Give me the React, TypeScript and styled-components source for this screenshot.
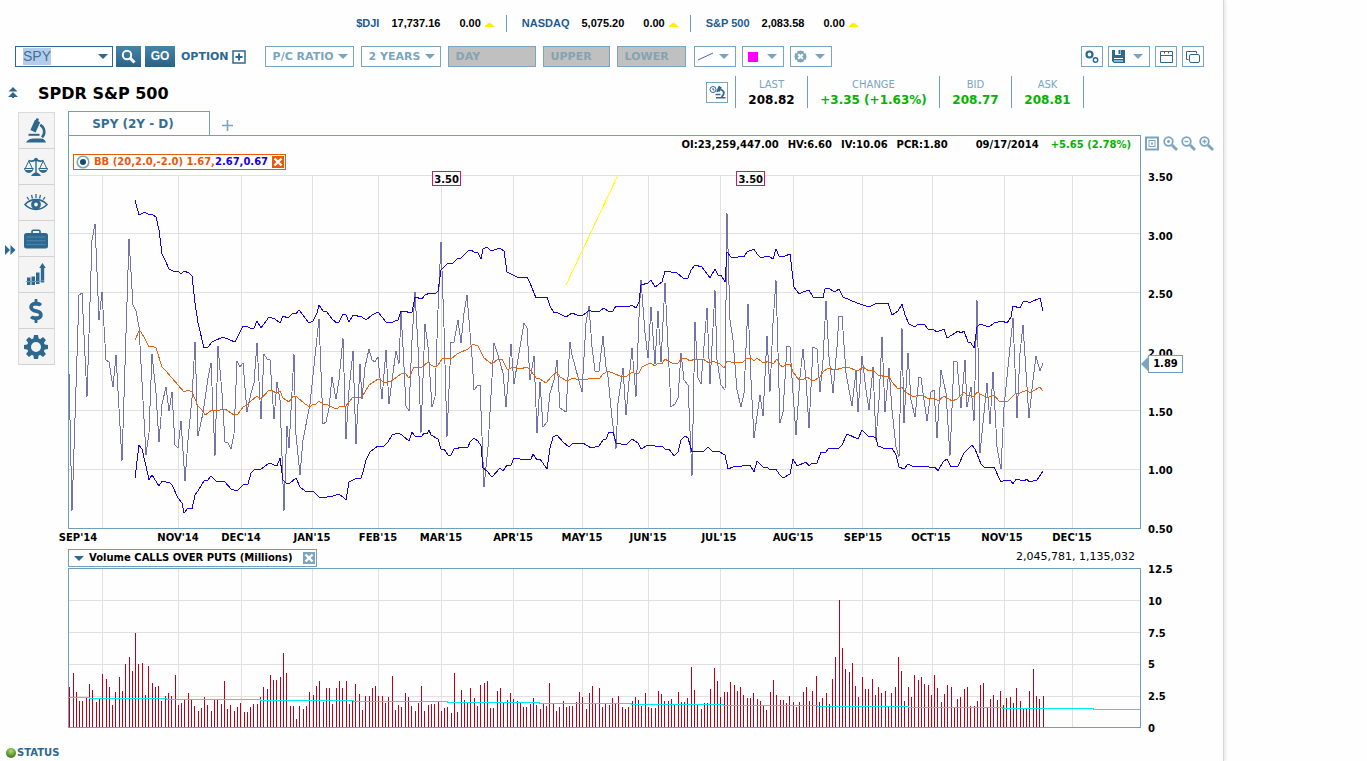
import React, { useEffect, useRef } from "react";
import styled, { createGlobalStyle } from "styled-components";
import { FaDollarSign } from "react-icons/fa";

const color = {
  line: "#6f9fbd",
  soft: "#7ba5bf",
  deep: "#2c688f",
  grid: "#e1e1e1",
  up: "#00b400",
  orange: "#e8590c",
  band: "#1500e0",
  price: "#7474a8",
  bar: "#b8001a",
};

const GlobalStyle = createGlobalStyle`
  *, *::before, *::after { box-sizing: border-box; }
  body {
    margin: 0;
    background: #fefefe;
    color: #000;
    font: 11px/16px "DejaVu Sans", Verdana, sans-serif;
  }
  button, input, select { font: inherit; margin: 0; }
  ul { list-style: none; margin: 0; padding: 0; }
  svg { display: block; }
`;

/* ---------- page frame ---------- */

const Page = styled.div`
  display: grid;
  grid-template-columns: minmax(0, 1fr) 143px;
  min-height: 100vh;
`;

const Main = styled.main`
  display: flex;
  flex-direction: column;
  min-width: 0;
  border-right: 1px solid #d6d6d6;
  box-shadow: 2px 0 2px #ececec;
`;

/* ---------- index ticker ---------- */

const Ticker = styled.ul`
  display: flex;
  justify-content: center;
  padding: 15px 12px 0 0;
  font: bold 11px/17px "Liberation Sans", Arial, sans-serif;
`;

const TickerItem = styled.li`
  display: flex;
  align-items: center;
  padding: 0 12px 0 15px;
  & + & { border-left: 1px solid ${color.line}; }
`;

const TickerLink = styled.a`
  color: #1b5a94;
  text-decoration: none;
  margin-right: 12px;
`;

const TickerChange = styled.span`
  display: flex;
  align-items: center;
  gap: 4px;
  margin-left: 19px;
`;

/* ---------- toolbar ---------- */

const Toolbar = styled.div`
  display: flex;
  align-items: center;
  margin-top: 14px;
  padding: 0 19px 0 15px;
`;

const Group = styled.div<{ $gap: number; $left?: number; $end?: boolean }>`
  display: flex;
  align-items: center;
  gap: ${(p) => p.$gap}px;
  margin-left: ${(p) => (p.$end ? "auto" : `${p.$left ?? 0}px`)};
`;

const SymbolBox = styled.label`
  display: flex;
  align-items: center;
  width: 98px;
  height: 21px;
  padding: 0 4px 0 7px;
  border: 1px solid ${color.deep};
  background: #fff;
`;

const SymbolInput = styled.input`
  flex: 1;
  min-width: 0;
  border: 0;
  padding: 0;
  outline: 0;
  background: transparent;
  color: #42709a;
  font: 14px/17px "Liberation Sans", Arial, sans-serif;
  &::selection { background: #b4cdea; color: #42709a; }
`;

const SolidButton = styled.button<{ $width: number }>`
  display: flex;
  align-items: center;
  justify-content: center;
  width: ${(p) => p.$width}px;
  height: 21px;
  padding: 0;
  border: 0;
  background: linear-gradient(#4684a8, #2a6288);
  color: #fff;
  font: bold 12px/21px "Liberation Sans", Arial, sans-serif;
`;

const OptionButton = styled.button`
  display: flex;
  align-items: center;
  gap: 3px;
  padding: 0;
  border: 0;
  background: none;
  color: ${color.deep};
  font-weight: bold;
`;

const SelectWrap = styled.label<{ $width: number }>`
  position: relative;
  width: ${(p) => p.$width}px;
  height: 21px;
  & > svg {
    position: absolute;
    right: 6px;
    top: 8px;
    pointer-events: none;
  }
`;

const Select = styled.select`
  width: 100%;
  height: 21px;
  padding: 0 7px;
  appearance: none;
  border: 1px solid ${color.soft};
  border-radius: 0;
  background: #fff;
  color: ${color.soft};
  font-weight: bold;
  &:disabled { background: #c0c0c0; color: #86a3b2; opacity: 1; }
`;

const FrameButton = styled.button<{ $wide?: boolean }>`
  display: flex;
  align-items: center;
  justify-content: ${(p) => (p.$wide ? "space-between" : "center")};
  width: ${(p) => (p.$wide ? 42 : 22)}px;
  height: 21px;
  padding: ${(p) => (p.$wide ? "0 6px 0 3px" : "0")};
  border: 1px solid ${color.soft};
  background: #fff;
  color: ${color.deep};
`;

const Swatch = styled.span`
  width: 10px;
  height: 10px;
  margin-left: 2px;
  background: #f0f;
`;

/* ---------- symbol header ---------- */

const InfoRow = styled.div`
  display: flex;
  align-items: center;
  height: 32px;
  margin-top: 9px;
  padding: 0 139px 0 8px;
`;

const BareButton = styled.button`
  display: flex;
  padding: 0;
  border: 0;
  background: none;
  color: ${color.deep};
`;

const Title = styled.h1`
  flex: 1;
  margin: 0 0 0 20px;
  padding-top: 3px;
  font-size: 16px;
  line-height: 20px;
`;

const Quotes = styled.dl`
  display: flex;
  margin: 0 0 0 7px;
  border-right: 1px solid ${color.line};
`;

const Quote = styled.div<{ $wide?: boolean }>`
  width: ${(p) => (p.$wide ? 132 : 72)}px;
  height: 32px;
  border-left: 1px solid ${color.line};
  text-align: center;
`;

const QuoteName = styled.dt`
  padding-top: 1px;
  color: ${color.soft};
  font-size: 10px;
  line-height: 15px;
`;

const QuoteValue = styled.dd<{ $up?: boolean }>`
  margin: 0;
  font-size: 12px;
  font-weight: bold;
  color: ${(p) => (p.$up ? color.up : "#000")};
`;

/* ---------- body ---------- */

const Body = styled.div`
  display: grid;
  grid-template-columns: 18px 37px minmax(0, 1fr);
  align-items: start;
  margin-top: 3px;
`;

const Rail = styled.div`
  padding: 134px 0 0 5px;
`;

const Side = styled.nav`
  display: flex;
  flex-direction: column;
  margin-top: 1px;
  border: 1px solid #dadada;
  border-bottom: 0;
`;

const SideButton = styled.button`
  display: flex;
  align-items: center;
  justify-content: center;
  height: 36px;
  padding: 0 1px 0 0;
  border: 0;
  border-bottom: 1px solid #d2d2d2;
  background: #f4f4f4;
  color: ${color.deep};
`;

const Workspace = styled.section`
  padding-left: 13px;
`;

const Tabs = styled.div`
  display: flex;
  align-items: center;
  height: 24px;
`;

const Tab = styled.button`
  position: relative;
  align-self: flex-start;
  width: 142px;
  height: 25px;
  padding: 0 12px 0 0;
  border: 1px solid ${color.line};
  border-bottom: 0;
  background: #fefefe;
  color: #356e94;
  font-size: 12px;
  font-weight: bold;
`;

const AddTab = styled(BareButton)`
  margin: 4px 0 0 12px;
  color: ${color.soft};
`;

const PlotRow = styled.div`
  display: grid;
  grid-template-columns: minmax(0, 1fr) 82px;
`;

const Plot = styled.div`
  position: relative;
  border: 1px solid ${color.line};
`;

const PlotHead = styled.div`
  display: flex;
  justify-content: flex-end;
  height: 39px;
  padding: 1px 9px 0 0;
  font-size: 10px;
  font-weight: bold;
`;

const Readout = styled.span<{ $up?: boolean; $left?: number }>`
  margin-left: ${(p) => p.$left ?? 9}px;
  color: ${(p) => (p.$up ? color.up : "#000")};
`;

const Canvas = styled.svg<{ $height: number }>`
  width: 100%;
  height: ${(p) => p.$height}px;
  shape-rendering: crispEdges;
  & * { vector-effect: non-scaling-stroke; }
`;

const Legend = styled.div`
  position: absolute;
  left: 4px;
  top: 18px;
  display: flex;
  align-items: center;
  height: 16px;
  border: 1px solid ${color.orange};
  background: #fff;
  color: ${color.orange};
  font-size: 10px;
  font-weight: bold;
  gap: 4px;
  padding: 0 1px 0 2px;
`;

const LegendBands = styled.span`
  color: ${color.band};
`;

const Flag = styled.span<{ $at: number }>`
  position: absolute;
  left: ${(p) => p.$at}%;
  top: 35px;
  width: 29px;
  height: 15px;
  border: 1px solid #d8107f;
  background: #fff;
  font-size: 10px;
  line-height: 15px;
  font-weight: bold;
  text-align: center;
`;

const Axis = styled.div`
  position: relative;
  display: flex;
  flex-direction: column;
  margin-bottom: -9px;
`;

const ZoomTools = styled.div`
  display: flex;
  gap: 3px;
  height: 16px;
  margin: 1px 0 0 4px;
  button { color: ${color.soft}; }
`;

const Scale = styled.ul<{ $top: number }>`
  flex: 1;
  display: flex;
  flex-direction: column;
  justify-content: space-between;
  margin-top: ${(p) => p.$top}px;
  padding-left: 7px;
  font-size: 10px;
  font-weight: bold;
`;

const LastTag = styled.div`
  position: absolute;
  left: 0;
  top: 220px;
  display: flex;
  align-items: center;
  font-size: 10px;
  font-weight: bold;
  span {
    width: 34px;
    border: 1px solid ${color.line};
    border-left: 0;
    background: #fff;
    text-align: center;
  }
`;

const Months = styled.ul`
  display: flex;
  height: 20px;
  margin: 0 82px 0 -9px;
  font-size: 10px;
  line-height: 17px;
  font-weight: bold;
`;

const Month = styled.li<{ $span: number }>`
  flex: ${(p) => p.$span} 0 0;
  min-width: 0;
  display: flex;
  justify-content: center;
  white-space: nowrap;
`;

const StudyHead = styled.div`
  display: flex;
  justify-content: space-between;
  align-items: flex-start;
  height: 19px;
  padding-right: 88px;
`;

const StudyTitle = styled.div`
  display: flex;
  align-items: center;
  width: 249px;
  height: 18px;
  padding: 0 1px 0 5px;
  gap: 5px;
  border: 1px solid ${color.line};
  background: #fff;
  h2 { flex: 1; margin: 0; font-size: 10px; line-height: 16px; white-space: nowrap; }
`;

const Status = styled.footer`
  display: flex;
  align-items: center;
  gap: 1px;
  margin-top: auto;
  padding-left: 6px;
  color: ${color.deep};
  font-size: 10px;
  font-weight: bold;
`;

const Led = styled.span`
  width: 10px;
  height: 10px;
  border-radius: 50%;
  background: radial-gradient(circle at 50% 30%, #b4dc7c, #4b8a1e 65%, #356512);
`;

/* ---------- icons ---------- */

const Caret = ({ fill = color.soft }: { fill?: string }) => (
  <svg width="10" height="5" viewBox="0 0 10 5"><path d="M0 0h10L5 5z" fill={fill} /></svg>
);

const Cross = ({ fill }: { fill: string }) => (
  <svg width="12" height="12" viewBox="0 0 12 12">
    <rect width="12" height="12" fill={fill} />
    <path d="M2.500 2.500l7 7M9.500 2.500l-7 7" stroke="#fff" strokeWidth="2.400" />
  </svg>
);

const UpMark = () => (
  <svg width="9" height="7" viewBox="0 0 9 7"><path d="M0 6L3.500 3h2L9 6v1H0z" fill="#fbf000" /></svg>
);

const Search = () => (
  <svg width="15" height="15" viewBox="0 0 15 15" fill="none" stroke="#fff">
    <circle cx="6" cy="6" r="4.200" strokeWidth="2" />
    <path d="M9 9l4.500 4.500" strokeWidth="3" />
  </svg>
);

const PlusBox = () => (
  <svg width="14" height="14" viewBox="0 0 14 14" fill="none" stroke={color.deep}>
    <rect x="1" y="1" width="12" height="12" strokeWidth="1.500" />
    <path d="M7 3.500v7M3.500 7h7" strokeWidth="2" />
  </svg>
);

const DiagonalLine = () => (
  <svg width="16" height="9" viewBox="0 0 16 9"><path d="M0 8L15 1" stroke="#4b5fc4" /></svg>
);

const Eraser = () => (
  <svg width="13" height="13" viewBox="0 0 13 13">
    <circle cx="6.500" cy="6.500" r="6" fill={color.soft} />
    <path d="M4.200 4.200l4.600 4.600M8.800 4.200L4.200 8.800" stroke="#fff" strokeWidth="2.200" />
    <path d="M1.500 1.500l1.500 1.500M11.500 1.500L10 3M1.500 11.500L3 10M11.500 11.500L10 10" stroke="#fff" strokeWidth="1.200" />
  </svg>
);

const Cogs = () => (
  <svg width="14" height="14" viewBox="0 0 14 14" fill="none" stroke={color.deep}>
    <circle cx="4.500" cy="4.500" r="3" strokeWidth="2.200" />
    <circle cx="10.500" cy="10" r="2.200" strokeWidth="1.400" />
  </svg>
);

const Floppy = () => (
  <svg width="13" height="13" viewBox="0 0 13 13">
    <path d="M0 0h13v13H2l-2-2z" fill={color.deep} />
    <path d="M3 0h6v5H3zM2 8h9v1H2zM2 10.500h9v1H2z" fill="#fff" />
    <path d="M6.500 0h2v4h-2z" fill={color.deep} />
  </svg>
);

const Calendar = () => (
  <svg width="13" height="12" viewBox="0 0 13 12" fill="none" stroke={color.deep}>
    <path d="M.5.500h12v11H.500zM.500 4.500h12M4.500.500v2M8.500.500v2" />
  </svg>
);

const Windows = () => (
  <svg width="14" height="12" viewBox="0 0 14 12" fill="none" stroke={color.deep}>
    <path d="M2.500 8.500h-2v-8h10v2" />
    <rect x="3.500" y="3.500" width="10" height="8" rx="1.500" />
  </svg>
);

const DoubleUp = () => (
  <svg width="10" height="11" viewBox="0 0 10 11" fill="currentColor">
    <path d="M5 0l4.500 4.500h-9zM5 5l5 5H6v1H4v-1H0z" />
  </svg>
);

const DoubleRight = () => (
  <svg width="11" height="10" viewBox="0 0 11 10" fill="currentColor">
    <path d="M0 0l5 5-5 5zM5.500 0l5 5-5 5z" />
  </svg>
);

const ScanIcon = () => (
  <svg width="17" height="14" viewBox="0 0 17 14" fill="none" stroke={color.deep}>
    <circle cx="4" cy="4.500" r="3" />
    <path d="M4 3v2h1.500" />
    <path d="M10.500 1l-2.500 6M12 2l-2 4.500" strokeWidth="1.800" />
    <path d="M12 4.500c4 2 3.500 5 .5 7.500" strokeWidth="1.800" />
    <path d="M6.500 9.500h5M7 12.800h9.500" strokeWidth="1.600" />
  </svg>
);

const MicroscopeIcon = () => (
  <svg width="22" height="25" viewBox="0 0 22 25" fill={color.deep}>
    <path d="M10.600 2.200l1-2.200 2.400 1-.8 2.200 2 1-4.600 10.200-5.200-2.400L10 1.800z" />
    <path d="M15.200 6.800c4.600 2.600 5.400 8.600 1.800 12.600" fill="none" stroke={color.deep} strokeWidth="2.600" />
    <path d="M3.500 16.800h11" stroke={color.deep} strokeWidth="2" />
    <path d="M1 24.500Q3 20.500 9 20.500h7q3.500 0 5 4z" />
  </svg>
);

const ScalesIcon = () => (
  <svg width="24" height="20" viewBox="0 0 24 20" fill="none" stroke={color.deep}>
    <path d="M4.500 3.500Q9 5 12 2.500 15 5 19.500 3.500" strokeWidth="1.800" />
    <path d="M12 1v15" strokeWidth="1.400" />
    <path d="M4.800 4L1 12M4.800 4l3.800 8M19.200 4l-3.800 8M19.200 4L23 12" />
    <path d="M.3 11.500h9q-.8 4-4.500 4t-4.500-4zM14.700 11.500h9q-.8 4-4.500 4t-4.500-4z" strokeWidth="1" />
    <path d="M1 13h7.600q-1.400 2.500-3.800 2.500T1 13zM15.400 13H23q-1.400 2.500-3.800 2.500T15.400 13zM7 19q2-3.500 5-3.500t5 3.500z" fill={color.deep} stroke="none" />
    <circle cx="12" cy="2.500" r="1.800" fill={color.deep} stroke="none" />
  </svg>
);

const EyeIcon = () => (
  <svg width="24" height="19" viewBox="0 0 24 19" fill="none" stroke={color.deep}>
    <path d="M1 11.500C6.500 5 17.500 5 23 11.500 17.500 18 6.500 18 1 11.500z" strokeWidth="1.600" />
    <circle cx="12" cy="11.500" r="3.400" strokeWidth="3" />
    <path d="M12 1v4M7.500 2l1 3.500M16.500 2l-1 3.500M3 4l1.800 2.600M21 4l-1.800 2.600" strokeWidth="1.300" />
  </svg>
);

const CaseIcon = () => (
  <svg width="24" height="20" viewBox="0 0 24 20">
    <path d="M8 5V2.500Q8 1.200 9.300 1.200h5.400Q16 1.200 16 2.500V5" fill="none" stroke={color.deep} strokeWidth="1.600" />
    <rect y="4" width="24" height="15.500" rx="2.500" fill={color.deep} />
    <path d="M2.500 8h19M2.500 11.800h19M2.500 15.600h19" stroke="#5288a9" strokeWidth="1" />
  </svg>
);

const GrowthIcon = () => (
  <svg width="20" height="24" viewBox="0 0 20 24" fill={color.deep}>
    <path d="M1 14.500h3.500V22H1zM5.500 13.500H9V22H5.500zM10 9.500h3.500V21H10zM14.800 4h3.400v15.500h-3.400z" />
    <path d="M16.500 0l3.300 5h-6.600z" />
    <path d="M0 18.500h13l5-1" stroke="#6f9ab5" fill="none" />
  </svg>
);

const GearIcon = () => (
  <svg width="24" height="24" viewBox="0 0 24 24">
    <circle cx="12" cy="12" r="7" fill="none" stroke={color.deep} strokeWidth="4" />
    {[0, 45, 90, 135, 180, 225, 270, 315].map((a) => (
      <path key={a} d="M10 0h4l.8 4.500H9.200z" fill={color.deep} transform={`rotate(${a} 12 12)`} />
    ))}
  </svg>
);

const PlusIcon = () => (
  <svg width="11" height="11" viewBox="0 0 11 11"><path d="M5.500 0v11M0 5.500h11" stroke="currentColor" strokeWidth="1.600" /></svg>
);

const FitIcon = () => (
  <svg width="15" height="15" viewBox="0 0 15 15" fill="none" stroke="currentColor">
    <rect x="1" y="1.500" width="12" height="12" strokeWidth="2" />
    <rect x="4" y="4.500" width="6" height="6" />
    <path d="M6 7.500h2" strokeWidth="2" />
  </svg>
);

const Lens = ({ mark }: { mark: string }) => (
  <svg width="15" height="15" viewBox="0 0 15 15" fill="none" stroke="currentColor">
    <circle cx="5.500" cy="5.500" r="4.300" strokeWidth="1.800" />
    <path d="M9 9l5 5" strokeWidth="2.800" />
    <path d={mark} strokeWidth="1.400" />
  </svg>
);

const TargetIcon = () => (
  <svg width="14" height="14" viewBox="0 0 14 14">
    <circle cx="7" cy="7" r="5.800" fill="#fff" stroke="#78a9be" strokeWidth="1.600" />
    <circle cx="7" cy="7" r="3" fill="#17496e" />
  </svg>
);

/* ---------- data ---------- */

const gridX = [102, 178, 241, 312, 378, 441, 513, 582, 648, 720, 793, 862, 932, 1004, 1072];

const upperBand =
  "135,200 139,215 145,212 149,215 152,214 156,217 159,230 162,254 165,260 169,269 175,272 178,271 181,274 184,271 189,273 192,276 195,303 198,323 204,348 208,347 212,342 223,337 230,340 235,342 243,326 247,326 251,329 254,328 257,321 261,328 269,317 275,319 280,323 283,316 288,318 293,313 296,314 299,310 309,323 313,321 317,313 319,305 323,311 326,311 333,320 337,323 339,322 343,314 346,315 349,322 353,315 362,317 366,320 372,315 378,312 386,322 390,323 398,320 401,311 406,311 409,313 412,312 415,297 422,299 425,295 430,293 435,294 438,291 441,270 447,264 453,263 458,258 461,258 468,251 471,250 474,252 478,253 481,259 483,249 487,247 491,251 497,249 500,248 504,251 507,272 517,277 527,277 530,283 536,298 547,297 550,306 554,313 556,312 566,317 572,313 577,315 582,316 587,312 589,310 593,312 600,311 604,308 609,312 613,311 616,306 630,306 632,305 636,308 639,302 641,285 648,283 651,280 655,287 662,282 665,271 677,273 683,278 688,278 691,270 695,265 702,267 710,278 715,269 718,275 721,275 725,282 727,252 731,257 735,257 738,257 741,256 744,257 747,252 754,249 757,254 761,258 767,256 769,256 773,259 776,249 779,256 785,256 790,254 794,287 799,294 803,292 809,290 813,297 816,297 823,298 825,289 829,288 833,291 836,291 839,289 843,297 857,303 863,305 869,307 875,304 883,303 888,303 892,315 895,313 898,311 902,304 905,315 909,324 915,327 918,324 925,325 928,329 933,329 937,332 944,329 947,338 952,335 958,331 961,333 964,331 968,342 971,343 974,348 977,327 980,324 989,327 994,323 1002,321 1007,323 1011,317 1013,306 1020,308 1023,302 1027,301 1029,303 1040,298 1043,311";

const middleBand =
  "135,340 139,331 141,332 145,339 149,347 152,346 156,348 162,367 165,370 172,378 178,385 184,392 188,390 192,392 198,406 202,410 205,415 212,410 215,411 225,409 234,415 238,414 243,407 247,405 251,401 257,396 261,399 269,390 273,391 276,393 280,391 283,398 289,402 293,396 297,397 305,404 310,407 313,404 316,404 319,401 323,404 328,405 336,409 341,406 345,407 353,397 362,397 369,385 378,379 386,383 393,380 402,373 405,373 409,378 414,367 422,367 428,362 431,365 435,367 438,365 442,359 445,358 451,359 457,354 468,349 473,344 475,345 478,346 484,358 492,364 498,359 502,359 507,369 509,369 513,367 520,369 527,367 531,371 536,378 540,379 546,383 552,376 557,372 560,377 567,381 573,378 576,379 582,380 588,379 600,378 603,374 608,371 620,376 627,376 632,372 636,374 639,373 642,367 648,364 651,363 655,366 658,363 662,364 665,359 668,361 674,364 678,363 682,358 686,358 690,361 695,359 703,359 709,363 713,361 720,364 724,368 727,361 731,362 743,362 747,358 751,358 754,361 757,358 762,362 766,363 767,361 773,364 777,359 780,365 783,367 787,364 790,364 793,372 799,380 802,379 804,379 807,377 813,381 820,377 823,372 828,368 835,370 842,368 847,367 858,371 863,367 866,369 869,371 873,370 878,375 887,377 889,376 892,382 898,389 902,387 905,392 914,397 918,395 923,395 928,399 934,398 938,401 944,396 952,401 957,399 964,392 967,395 970,395 974,397 977,392 987,398 994,395 1000,402 1003,401 1008,401 1015,394 1020,393 1027,390 1030,393 1040,387 1043,391";

const lowerBand =
  "135,478 139,445 142,449 146,466 149,480 152,475 159,486 162,481 170,483 172,485 178,498 182,503 184,513 188,508 192,509 195,495 198,491 204,481 208,480 211,476 216,481 225,482 231,489 237,491 243,485 248,484 251,473 255,469 260,470 269,463 277,466 280,458 283,480 287,484 290,483 296,478 300,487 305,491 313,491 319,497 327,497 333,496 339,494 343,497 346,500 349,482 355,479 361,478 363,472 366,460 370,452 378,446 383,447 388,442 392,435 398,433 402,435 409,441 412,432 415,436 422,436 424,433 427,434 429,430 431,435 438,439 441,449 444,449 448,455 451,455 454,449 463,447 468,447 470,442 474,438 478,441 481,446 483,468 487,471 491,476 493,476 500,468 503,471 507,465 511,465 514,458 520,459 531,459 533,454 537,460 540,459 547,469 550,448 553,437 557,435 563,442 569,447 573,443 578,444 583,443 591,448 599,446 603,440 606,439 609,432 613,432 616,443 626,445 632,439 638,443 641,449 648,445 655,446 662,446 665,449 669,449 674,456 678,452 681,440 685,436 688,438 692,452 704,451 708,447 712,451 718,451 725,455 728,469 733,467 738,466 742,466 750,465 754,472 757,461 760,464 763,467 767,467 769,469 776,469 779,474 783,478 790,474 793,459 797,466 806,462 809,466 812,463 817,463 821,452 826,452 829,448 839,448 842,445 847,434 858,439 862,430 868,436 872,436 876,438 878,446 886,449 892,448 896,455 899,467 904,469 908,464 914,467 920,466 924,466 929,467 935,467 938,471 943,462 947,459 951,467 958,466 964,453 972,445 975,449 981,464 984,467 990,468 994,467 1001,482 1005,480 1011,481 1013,484 1016,479 1020,480 1024,481 1027,479 1029,482 1037,480 1039,477 1043,471";

const ratio =
  "69,373 72,511 79,295 82,293 87,397 92,240 95,224 99,320 102,292 106,360 109,362 113,387 116,355 122,461 129,239 133,305 136,311 139,327 146,455 149,433 152,354 156,393 159,442 162,404 166,387 169,411 172,392 175,445 178,448 181,421 185,481 188,440 192,398 195,342 198,436 203,413 208,378 211,363 215,456 218,346 222,393 225,442 228,443 231,449 234,434 237,361 240,367 243,363 247,412 251,393 254,383 257,343 261,419 264,354 267,359 270,360 274,419 277,382 280,400 284,511 287,426 289,448 294,354 296,435 300,475 303,440 310,404 316,347 319,319 323,424 326,422 329,408 332,377 336,399 339,380 343,338 346,439 349,390 353,351 356,444 360,364 362,399 365,367 369,349 372,360 375,362 378,357 382,399 386,350 389,404 393,373 396,351 399,364 401,312 403,347 406,406 409,411 412,340 415,292 418,347 421,433 425,324 428,347 432,407 435,397 438,310 441,242 444,327 447,437 451,342 454,342 458,320 461,343 464,313 467,295 469,320 472,357 474,390 478,385 480,385 484,487 488,447 494,343 498,355 503,373 506,407 511,344 514,384 520,347 524,323 527,328 530,380 534,356 537,433 540,382 543,427 547,422 550,393 554,380 557,360 560,408 566,412 570,342 572,355 582,392 586,323 589,306 592,347 595,371 599,371 603,336 606,367 608,377 612,418 616,449 618,403 623,368 626,415 632,348 636,397 639,317 641,280 645,333 648,358 651,307 655,364 658,311 661,362 665,283 668,347 671,407 675,404 678,398 681,353 684,380 688,385 692,476 695,322 698,378 701,384 707,308 710,384 715,290 717,360 721,385 725,390 727,213 730,320 733,340 737,390 741,407 744,393 748,304 751,380 754,438 760,395 763,416 767,336 770,392 773,323 776,280 780,423 783,412 787,346 790,347 793,393 796,435 800,377 803,349 806,380 809,428 813,347 817,349 820,392 823,360 826,301 829,357 833,393 837,347 839,316 842,316 846,373 852,406 856,371 858,412 862,356 866,390 869,410 873,367 876,440 879,400 882,337 885,412 889,368 892,410 896,447 899,457 902,328 904,423 908,353 911,400 915,417 919,377 921,378 924,400 927,421 931,392 934,390 937,438 941,370 946,393 950,456 954,361 957,362 961,408 965,360 967,407 971,387 974,421 977,300 979,393 980,453 987,383 990,424 993,372 997,447 1001,469 1004,407 1010,347 1013,318 1017,418 1020,353 1023,325 1029,418 1033,380 1036,356 1040,371 1043,363";

/* Tops of the volume bars in plot units, measured against a baseline of 563. */
const BASE = 563;
const barTops = [
  440, 400, 455, 484, 484, 474, 432, 450, 486, 474, 402, 418, 442, 495, 456, 410, 452, 373, 350, 394,
  278, 373, 370, 466, 377, 428, 442, 438, 482, 468, 458, 468, 404, 494, 488, 480, 460, 480, 498, 512,
  503, 472, 495, 514, 478, 478, 492, 422, 508, 494, 512, 502, 490, 515, 515, 500, 492, 492, 472, 440,
  446, 404, 420, 420, 412, 338, 400, 498, 498, 538, 498, 506, 498, 456, 464, 438, 422, 485, 445, 445,
  492, 445, 422, 445, 422, 492, 482, 432, 462, 510, 468, 468, 445, 438, 468, 468, 490, 472, 408, 510,
  494, 500, 458, 470, 498, 514, 490, 438, 512, 496, 492, 492, 484, 512, 505, 500, 518, 398, 515, 450,
  480, 485, 445, 474, 498, 434, 428, 424, 504, 504, 452, 444, 488, 480, 458, 478, 484, 488, 500, 500,
  492, 474, 494, 508, 490, 498, 428, 490, 512, 502, 482, 502, 498, 498, 486, 455, 472, 508, 458, 438,
  490, 445, 500, 488, 494, 474, 490, 468, 502, 506, 502, 484, 470, 480, 498, 460, 500, 504, 504, 452,
  462, 484, 482, 478, 494, 456, 486, 486, 474, 380, 450, 494, 506, 488, 488, 446, 384, 422, 472, 456,
  456, 426, 436, 454, 442, 465, 474, 474, 460, 476, 484, 496, 510, 456, 420, 465, 480, 480, 490, 468,
  486, 500, 486, 456, 442, 482, 452, 408, 486, 475, 458, 492, 418, 350, 181, 324, 386, 396, 370, 438,
  470, 412, 448, 446, 417, 464, 442, 458, 452, 498, 460, 440, 350, 394, 484, 442, 470, 404, 420, 410,
  432, 436, 466, 404, 444, 485, 462, 434, 440, 502, 478, 472, 446, 440, 498, 498, 482, 436, 430, 502,
  478, 466, 480, 452, 494, 474, 470, 488, 444, 484, 506, 506, 452, 386, 468, 476, 468,
];

const months: [string, number][] = [
  ["SEP'14", 38], ["", 50], ["NOV'14", 62], ["DEC'14", 64], ["JAN'15", 78], ["FEB'15", 54],
  ["MAR'15", 72], ["APR'15", 72], ["MAY'15", 66], ["JUN'15", 66], ["JUL'15", 76], ["AUG'15", 72],
  ["SEP'15", 68], ["OCT'15", 68], ["NOV'15", 74], ["DEC'15", 66], ["", 36],
];

const indexes = [
  { name: "$DJI", value: "17,737.16" },
  { name: "NASDAQ", value: "5,075.20" },
  { name: "S&P 500", value: "2,083.58" },
];

const sideItems = [
  { label: "Research", icon: <MicroscopeIcon /> },
  { label: "Compare", icon: <ScalesIcon /> },
  { label: "Watch", icon: <EyeIcon /> },
  { label: "Portfolio", icon: <CaseIcon /> },
  { label: "Studies", icon: <GrowthIcon /> },
  { label: "Trade", icon: <FaDollarSign size={24} /> },
  { label: "Settings", icon: <GearIcon /> },
];

/* ---------- parts ---------- */

function Picker({ name, width, disabled }: { name: string; width: number; disabled?: boolean }) {
  return (
    <SelectWrap $width={width}>
      <Select aria-label={name} disabled={disabled}>
        <option>{name}</option>
      </Select>
      {!disabled && <Caret />}
    </SelectWrap>
  );
}

function SymbolField() {
  const ref = useRef<HTMLInputElement>(null);
  useEffect(() => {
    ref.current?.focus();
    ref.current?.select();
  }, []);
  return (
    <SymbolBox>
      <SymbolInput ref={ref} aria-label="Symbol" defaultValue="SPY" />
      <Caret fill={color.deep} />
    </SymbolBox>
  );
}

function RatioChart() {
  return (
    <Canvas $height={353} viewBox="69 175 1071 353" preserveAspectRatio="none" fill="none" role="img" aria-label="Put/call ratio">
      <g fill={color.grid}>
        {[175, 233, 292, 351, 410, 469].map((y) => (
          <rect key={y} x="69" y={y} width="1071" height="1" />
        ))}
        {gridX.map((x) => (
          <rect key={x} x={x} y="175" width="1" height="353" />
        ))}
      </g>
      <polyline points={ratio} stroke={color.price} />
      <polyline points={middleBand} stroke="#e06414" />
      <polyline points={upperBand} stroke={color.band} />
      <polyline points={lowerBand} stroke={color.band} />
      <path d="M566 285L618 175" stroke="#ffff00" />
    </Canvas>
  );
}

function VolumeChart() {
  return (
    <Canvas $height={158} viewBox="0 87 3213 474" preserveAspectRatio="none" fill="none" role="img" aria-label="Volume">
      <g fill={color.grid}>
        {[180, 276, 372, 468].map((y) => (
          <rect key={y} x="0" y={y} width="3213" height="3" />
        ))}
        {gridX.map((x) => (
          <rect key={x} x={(x - 69) * 3} y="87" width="3" height="474" />
        ))}
      </g>
      <g fill={color.bar}>
        {barTops.map((top, i) => (
          <rect key={i} x={Math.round((1 + i * 9.864) / 3) * 3} y={top} width="3" height={BASE - top} />
        ))}
      </g>
      <path
        stroke="#00eef2"
        d="M0 472H60V475H291V478H573V481H852V484H1134V487H1410V490H1686V493H1962V496H2244V499H2517V502H2799V505H3072V508H3213"
      />
    </Canvas>
  );
}

export default function App() {
  return (
    <Page>
      <GlobalStyle />
      <Main>
        <Ticker>
          {indexes.map((i) => (
            <TickerItem key={i.name}>
              <TickerLink href="#">{i.name}</TickerLink>
              <span>{i.value}</span>
              <TickerChange>
                0.00 <UpMark />
              </TickerChange>
            </TickerItem>
          ))}
        </Ticker>

        <Toolbar>
          <Group $gap={3}>
            <SymbolField />
            <SolidButton $width={25} aria-label="Search"><Search /></SolidButton>
          </Group>
          <Group $gap={6} $left={4}>
            <SolidButton $width={30}>GO</SolidButton>
            <OptionButton>OPTION <PlusBox /></OptionButton>
          </Group>
          <Group $gap={7} $left={19}>
            <Picker name="P/C RATIO" width={89} />
            <Picker name="2 YEARS" width={80} />
            <Picker name="DAY" width={88} disabled />
            <Picker name="UPPER" width={67} disabled />
            <Picker name="LOWER" width={69} disabled />
          </Group>
          <Group $gap={6} $left={8}>
            <FrameButton $wide aria-label="Line tool"><DiagonalLine /><Caret /></FrameButton>
            <FrameButton $wide aria-label="Line colour"><Swatch /><Caret /></FrameButton>
            <FrameButton $wide aria-label="Remove drawings"><Eraser /><Caret /></FrameButton>
          </Group>
          <Group $gap={5} $end>
            <FrameButton aria-label="Preferences"><Cogs /></FrameButton>
            <FrameButton $wide aria-label="Save"><Floppy /><Caret /></FrameButton>
            <FrameButton aria-label="Calendar"><Calendar /></FrameButton>
            <FrameButton aria-label="New window"><Windows /></FrameButton>
          </Group>
        </Toolbar>

        <InfoRow>
          <BareButton aria-label="Collapse header"><DoubleUp /></BareButton>
          <Title>SPDR S&amp;P 500</Title>
          <FrameButton aria-label="Scan history"><ScanIcon /></FrameButton>
          <Quotes>
            <Quote>
              <QuoteName>LAST</QuoteName>
              <QuoteValue>208.82</QuoteValue>
            </Quote>
            <Quote $wide>
              <QuoteName>CHANGE</QuoteName>
              <QuoteValue $up>+3.35 (+1.63%)</QuoteValue>
            </Quote>
            <Quote>
              <QuoteName>BID</QuoteName>
              <QuoteValue $up>208.77</QuoteValue>
            </Quote>
            <Quote>
              <QuoteName>ASK</QuoteName>
              <QuoteValue $up>208.81</QuoteValue>
            </Quote>
          </Quotes>
        </InfoRow>

        <Body>
          <Rail>
            <BareButton aria-label="Expand panel"><DoubleRight /></BareButton>
          </Rail>
          <Side>
            {sideItems.map((s) => (
              <SideButton key={s.label} aria-label={s.label}>{s.icon}</SideButton>
            ))}
          </Side>
          <Workspace>
            <Tabs>
              <Tab>SPY (2Y - D)</Tab>
              <AddTab aria-label="Add tab"><PlusIcon /></AddTab>
            </Tabs>
            <PlotRow>
              <Plot>
                <PlotHead>
                  <Readout>OI:23,259,447.00</Readout>
                  <Readout>HV:6.60</Readout>
                  <Readout>IV:10.06</Readout>
                  <Readout>PCR:1.80</Readout>
                  <Readout $left={28}>09/17/2014</Readout>
                  <Readout $up $left={12}>+5.65 (2.78%)</Readout>
                </PlotHead>
                <RatioChart />
                <Legend>
                  <TargetIcon />
                  <span>BB (20,2.0,-2.0) 1.67,<LegendBands>2.67,0.67</LegendBands></span>
                  <BareButton aria-label="Remove study"><Cross fill={color.orange} /></BareButton>
                </Legend>
                <Flag $at={33.9}>3.50</Flag>
                <Flag $at={62.3}>3.50</Flag>
              </Plot>
              <Axis>
                <ZoomTools>
                  <BareButton aria-label="Fit"><FitIcon /></BareButton>
                  <BareButton aria-label="Zoom to area"><Lens mark="M4 5.500h3M5.500 4v3" /></BareButton>
                  <BareButton aria-label="Zoom out"><Lens mark="M3.500 5.500h4" /></BareButton>
                  <BareButton aria-label="Zoom in"><Lens mark="M3.500 5.500h4M5.500 3.500v4" /></BareButton>
                </ZoomTools>
                <Scale $top={18}>
                  {["3.50", "3.00", "2.50", "2.00", "1.50", "1.00", "0.50"].map((v) => (
                    <li key={v}>{v}</li>
                  ))}
                </Scale>
                <LastTag>
                  <svg width="8" height="18" viewBox="0 0 8 18">
                    <path d="M0 9l7-7v14z" fill={color.soft} />
                    <path d="M7.500 0v18" stroke={color.soft} />
                  </svg>
                  <span>1.89</span>
                </LastTag>
              </Axis>
            </PlotRow>
            <Months>
              {months.map(([label, span], i) => (
                <Month key={i} $span={span}>{label}</Month>
              ))}
            </Months>
            <StudyHead>
              <StudyTitle>
                <Caret fill={color.deep} />
                <h2>Volume CALLS OVER PUTS (Millions)</h2>
                <BareButton aria-label="Remove volume study"><Cross fill={color.soft} /></BareButton>
              </StudyTitle>
              <span>2,045,781, 1,135,032</span>
            </StudyHead>
            <PlotRow>
              <Plot>
                <VolumeChart />
              </Plot>
              <Axis>
                <Scale $top={-6}>
                  {["12.5", "10", "7.5", "5", "2.5", "0"].map((v) => (
                    <li key={v}>{v}</li>
                  ))}
                </Scale>
              </Axis>
            </PlotRow>
          </Workspace>
        </Body>

        <Status>
          <Led />
          STATUS
        </Status>
      </Main>
    </Page>
  );
}
